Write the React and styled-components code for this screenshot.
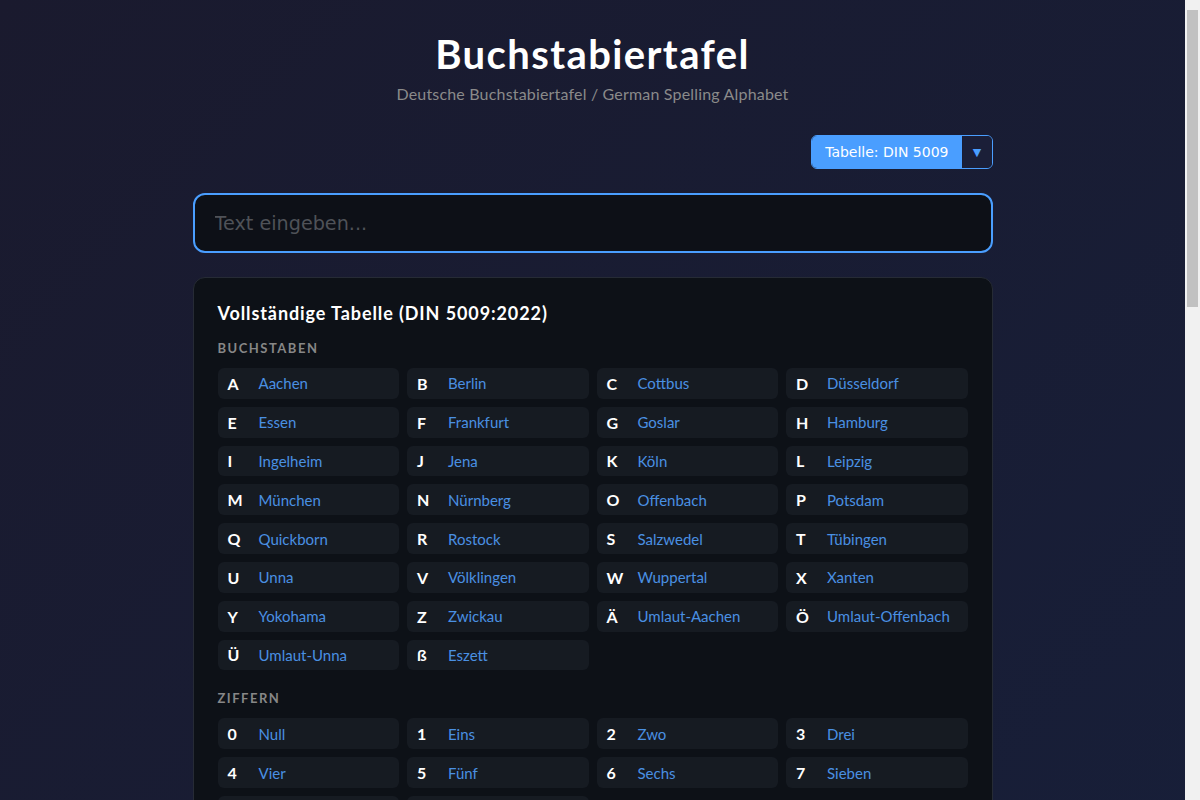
import React from 'react'
import styled, { createGlobalStyle } from 'styled-components'

const GlobalStyle = createGlobalStyle`
	html, body {
		margin: 0;
		padding: 0;
	}

	html {
		background: #1a1a2e;
	}

	body {
		min-height: 100vh;
		padding-right: 15px;
		background:
			linear-gradient(#c1c1c1, #c1c1c1) right 2px top 10px / 11px 297px no-repeat fixed,
			linear-gradient(#f1f1f1, #f1f1f1) right top / 15px 100% no-repeat fixed,
			linear-gradient(135deg, #1a1a2e 0%, #16213e 100%);
		color: #e6e6e6;
		font-family: Lato, "Noto Sans", sans-serif;
	}
`

const din2022 = [
	['A', 'Aachen'], ['B', 'Berlin'], ['C', 'Cottbus'], ['D', 'Düsseldorf'],
	['E', 'Essen'], ['F', 'Frankfurt'], ['G', 'Goslar'], ['H', 'Hamburg'],
	['I', 'Ingelheim'], ['J', 'Jena'], ['K', 'Köln'], ['L', 'Leipzig'],
	['M', 'München'], ['N', 'Nürnberg'], ['O', 'Offenbach'], ['P', 'Potsdam'],
	['Q', 'Quickborn'], ['R', 'Rostock'], ['S', 'Salzwedel'], ['T', 'Tübingen'],
	['U', 'Unna'], ['V', 'Völklingen'], ['W', 'Wuppertal'], ['X', 'Xanten'],
	['Y', 'Yokohama'], ['Z', 'Zwickau'], ['Ä', 'Umlaut-Aachen'], ['Ö', 'Umlaut-Offenbach'],
	['Ü', 'Umlaut-Unna'], ['ß', 'Eszett'],
]

const digits = [
	['0', 'Null'], ['1', 'Eins'], ['2', 'Zwo'], ['3', 'Drei'], ['4', 'Vier'],
	['5', 'Fünf'], ['6', 'Sechs'], ['7', 'Sieben'], ['8', 'Acht'], ['9', 'Neun'],
]

const din1983 = [
	['A', 'Anton'], ['Ä', 'Ärger'], ['B', 'Berta'], ['C', 'Cäsar'],
	['Ch', 'Charlotte'], ['D', 'Dora'], ['E', 'Emil'], ['F', 'Friedrich'],
	['G', 'Gustav'], ['H', 'Heinrich'], ['I', 'Ida'], ['J', 'Julius'],
	['K', 'Kaufmann'], ['L', 'Ludwig'], ['M', 'Martha'], ['N', 'Nordpol'],
	['O', 'Otto'], ['Ö', 'Ökonom'], ['P', 'Paula'], ['Q', 'Quelle'],
	['R', 'Richard'], ['S', 'Samuel'], ['Sch', 'Schule'], ['ß', 'Eszett'],
	['T', 'Theodor'], ['U', 'Ulrich'], ['Ü', 'Übermut'], ['V', 'Viktor'],
	['W', 'Wilhelm'], ['X', 'Xanthippe'], ['Y', 'Ypsilon'], ['Z', 'Zacharias'],
]

const nato = [
	['A', 'Alfa'], ['B', 'Bravo'], ['C', 'Charlie'], ['D', 'Delta'],
	['E', 'Echo'], ['F', 'Foxtrot'], ['G', 'Golf'], ['H', 'Hotel'],
	['I', 'India'], ['J', 'Juliett'], ['K', 'Kilo'], ['L', 'Lima'],
	['M', 'Mike'], ['N', 'November'], ['O', 'Oscar'], ['P', 'Papa'],
	['Q', 'Quebec'], ['R', 'Romeo'], ['S', 'Sierra'], ['T', 'Tango'],
	['U', 'Uniform'], ['V', 'Victor'], ['W', 'Whiskey'], ['X', 'X-ray'],
	['Y', 'Yankee'], ['Z', 'Zulu'],
]

const natoDigits = [
	['0', 'Zero'], ['1', 'One'], ['2', 'Two'], ['3', 'Three'], ['4', 'Four'],
	['5', 'Five'], ['6', 'Six'], ['7', 'Seven'], ['8', 'Eight'], ['9', 'Nine'],
]

function Section({ label, items }) {
	return (
		<SectionBox>
			<SectionLabel>{label}</SectionLabel>
			<Grid>
				{items.map(([char, word]) => (
					<Item key={char + word}>
						<Char>{char}</Char>
						<Word>{word}</Word>
					</Item>
				))}
			</Grid>
		</SectionBox>
	)
}

function App() {
	const [text, setText] = React.useState('')

	return (
		<>
			<GlobalStyle />
			<Page>
				<Header>
					<h1>Buchstabiertafel</h1>
					<p>Deutsche Buchstabiertafel / German Spelling Alphabet</p>
				</Header>

				<Toolbar>
					<TableSelect>
						<SelectValue>Tabelle: DIN 5009</SelectValue>
						<SelectArrow>▼</SelectArrow>
					</TableSelect>
				</Toolbar>

				<TextInput
					value={text}
					onChange={e => setText(e.target.value)}
					placeholder="Text eingeben..."
				/>

				<Card>
					<CardTitle>Vollständige Tabelle (DIN 5009:2022)</CardTitle>
					<Section label="Buchstaben" items={din2022} />
					<Section label="Ziffern" items={digits} />
				</Card>

				<Card>
					<CardTitle>Alte Tabelle (DIN 5009:1983)</CardTitle>
					<Section label="Buchstaben" items={din1983} />
				</Card>

				<Card>
					<CardTitle>Internationale Tabelle (NATO / ICAO)</CardTitle>
					<Section label="Buchstaben" items={nato} />
					<Section label="Ziffern" items={natoDigits} />
				</Card>

				<Footer>Buchstabiertafel nach DIN 5009 · Ländertabelle seit 2022</Footer>
			</Page>
		</>
	)
}

const Page = styled.div`
	max-width: 800px;
	margin: 0 auto;
	padding: 30px 0 60px;
`

const Header = styled.header`
	text-align: center;

	h1 {
		margin: 0;
		font-size: 40px;
		line-height: 48px;
		font-weight: 700;
		letter-spacing: 1.4px;
		color: #ffffff;
	}

	p {
		margin: 6px 0 0;
		font-size: 16px;
		line-height: 20px;
		letter-spacing: 0.18px;
		color: #8a8a8a;
	}
`

const Toolbar = styled.div`
	display: flex;
	justify-content: flex-end;
	margin-top: 31px;
`

const TableSelect = styled.div`
	display: flex;
	height: 34px;
	box-sizing: border-box;
	border: 1px solid #4a9eff;
	border-radius: 6px;
	overflow: hidden;
	font-family: "DejaVu Sans", sans-serif;
	cursor: pointer;
`

const SelectValue = styled.span`
	display: flex;
	align-items: center;
	padding: 0 13px;
	background: #4a9eff;
	color: #ffffff;
	font-size: 14px;
`

const SelectArrow = styled.span`
	display: flex;
	align-items: center;
	justify-content: center;
	width: 29px;
	border-left: 1px solid #1a1d33;
	background: #1b1f38;
	color: #4a9eff;
	font-size: 11px;
`

const TextInput = styled.input`
	display: block;
	width: 100%;
	height: 60px;
	box-sizing: border-box;
	margin-top: 24px;
	padding: 0 20px;
	background: #0d1017;
	border: 2px solid #4a9eff;
	border-radius: 12px;
	color: #e6e6e6;
	font-family: "DejaVu Sans", sans-serif;
	font-size: 19.2px;
	outline: none;

	&::placeholder {
		color: #4f5258;
	}
`

const Card = styled.section`
	margin-top: 24px;
	padding: 24px;
	background: #0d1117;
	border: 1px solid #262b35;
	border-radius: 12px;
`

const CardTitle = styled.h2`
	margin: 0 0 15px;
	font-size: 18px;
	line-height: 23px;
	font-weight: 700;
	letter-spacing: 0.9px;
	color: #ffffff;
`

const SectionBox = styled.div`
	& + & {
		margin-top: 20px;
	}
`

const SectionLabel = styled.h3`
	margin: 0 0 12px;
	font-size: 13px;
	line-height: 16px;
	font-weight: 700;
	letter-spacing: 1.5px;
	text-transform: uppercase;
	color: #878787;
`

const Grid = styled.div`
	display: grid;
	grid-template-columns: repeat(4, 1fr);
	gap: 8px;
`

const Item = styled.div`
	display: flex;
	align-items: center;
	height: 30.8px;
	padding: 0 10px;
	background: #161b22;
	border-radius: 6px;
`

const Char = styled.span`
	min-width: 31px;
	font-size: 16px;
	font-weight: 700;
	color: #ffffff;
`

const Word = styled.span`
	font-size: 15px;
	color: #4a90e2;
	white-space: nowrap;
`

const Footer = styled.footer`
	margin-top: 32px;
	text-align: center;
	font-size: 13px;
	color: #6a6f7c;
`

export default App
